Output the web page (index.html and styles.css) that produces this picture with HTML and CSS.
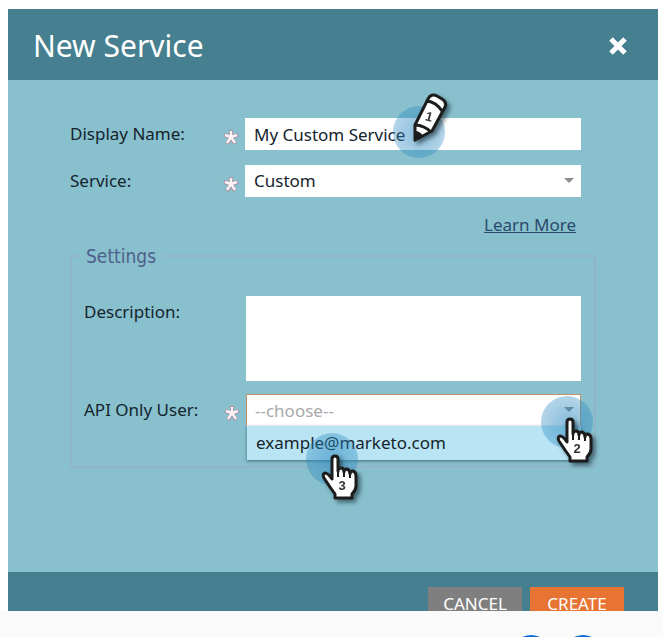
FILE: index.html
```html
<!DOCTYPE html>
<html lang="en">
<head>
  <meta charset="UTF-8">
  <meta name="viewport" content="width=device-width, initial-scale=1.0">
  <title>New Service</title>
  <link rel="stylesheet" href="styles.css">
</head>
<body>
  <main class="stage">
    <form class="dialog">
      <header class="dialog-header">
        <h1>New Service</h1>
        <button type="button" class="close-btn" aria-label="Close">
          <svg width="20" height="20" viewBox="0 0 20 20"><path d="M3 3L17 17M17 3L3 17" stroke="#fff" stroke-width="5"/></svg>
        </button>
      </header>

      <div class="dialog-body">
        <div class="row">
          <label for="display-name">Display Name:</label>
          <svg class="required" viewBox="0 0 16 16"><use href="#star"/></svg>
          <div class="field">
            <input type="text" id="display-name" value="My Custom Service">
            <div class="marker marker-one">
              <svg width="44" height="56" viewBox="8 2 44 56">
                <path d="M16 54V39L29 13Q32 7 38 10L43 13Q48 16 46 21L33 45Z" fill="#fff" stroke="#1c1c1c" stroke-width="3" stroke-linejoin="round"/>
                <path d="M28 15Q37 16 43 25M17 39Q26 40 32 46" fill="none" stroke="#1c1c1c" stroke-width="3"/>
                <path d="M16 54V46Q20 46 23 50Z" fill="#1c1c1c" stroke="#1c1c1c" stroke-width="2"/>
                <text x="30" y="35" text-anchor="middle" transform="rotate(15 30 31)">1</text>
              </svg>
            </div>
          </div>
        </div>

        <div class="row">
          <label for="service">Service:</label>
          <svg class="required" viewBox="0 0 16 16"><use href="#star"/></svg>
          <div class="field select-field">
            <select id="service"><option>Custom</option></select>
          </div>
        </div>

        <p class="learn-more"><a href="#">Learn More</a></p>

        <fieldset class="settings">
          <legend>Settings</legend>
          <div class="row row-top">
            <label for="description">Description:</label>
            <span></span>
            <div class="field"><textarea id="description"></textarea></div>
          </div>

          <div class="row">
            <label for="api-user">API Only User:</label>
            <svg class="required" viewBox="0 0 16 16"><use href="#star"/></svg>
            <div class="field select-field open">
              <select id="api-user"><option>--choose--</option></select>
              <ul class="menu">
                <li>example@marketo.com</li>
              </ul>
              <div class="marker marker-two">
                <svg width="42" height="52" viewBox="0 0 42 52">
                  <use href="#hand"/>
                  <text x="22" y="37" text-anchor="middle">2</text>
                </svg>
              </div>
              <div class="marker marker-three">
                <svg width="42" height="52" viewBox="0 0 42 52">
                  <use href="#hand"/>
                  <text x="22" y="37" text-anchor="middle">3</text>
                </svg>
              </div>
            </div>
          </div>
        </fieldset>
      </div>

      <footer class="dialog-footer">
        <button type="button" class="btn cancel-btn">CANCEL</button>
        <button type="submit" class="btn create-btn">CREATE</button>
      </footer>
    </form>
  </main>

  <div class="page-actions">
    <button type="button" class="round-btn" aria-label="Previous"></button>
    <button type="button" class="round-btn" aria-label="Next"></button>
  </div>

  <svg class="symbols" width="0" height="0">
    <symbol id="star" viewBox="0 0 16 16">
      <path d="M8 8V1M8 8L1 6M8 8L15 6M8 8L4 15M8 8L12 15" stroke="#b9778c" stroke-width="4" opacity="0.6"/>
      <path d="M8 8V2M8 8L2 6M8 8L14 6M8 8L4 14M8 8L12 14" stroke="#fff3f5" stroke-width="2.4"/>
    </symbol>
    <symbol id="hand" viewBox="0 0 42 52">
      <path d="M12 24V6Q12 3 15 3Q18 3 18 6V18Q18 15 21 15Q24 15 24 19Q24 16 27 16Q30 17 30 21Q30 18 33 18Q36 19 36 23V33Q36 37 32 41V45H15V41L10 34L4 25Q2 21 5 20Q8 20 12 26Z" fill="#fff" stroke="#1c1c1c" stroke-width="3" stroke-linejoin="round"/>
      <path d="M18 17V24M24 18V24M30 20V25" stroke="#1c1c1c" stroke-width="2"/>
    </symbol>
  </svg>
</body>
</html>
```
FILE: styles.css
```css
/* General Styles */
* {
  box-sizing: border-box;
}

body {
  margin: 0;
  font-family: 'Noto Sans', 'Open Sans', sans-serif;
  font-size: 17px;
  line-height: 24px;
  background-color: #fafafa;
  color: #14242c;
  height: 100vh;
  overflow: hidden;
}

input,
select,
textarea,
button {
  font: inherit;
  color: inherit;
  border: none;
  border-radius: 0;
  outline: none;
}

.stage {
  background-color: #fff;
  padding: 9px 5px 0 8px;
}

/* Dialog */
.dialog-header {
  display: flex;
  justify-content: space-between;
  align-items: center;
  padding: 17px 30px 14px 25px;
  background-color: #467f8f;
  color: #fff;
}

.dialog-header h1 {
  margin: 0;
  font-size: 30px;
  line-height: 40px;
  font-weight: 400;
}

.close-btn {
  display: flex;
  padding: 0;
  background: none;
  cursor: pointer;
}

.dialog-body {
  padding: 38px 62px 104px;
  background-color: #88c0ce;
}

.row {
  display: grid;
  grid-template-columns: 153px 22px 1fr;
  align-items: center;
  margin-bottom: 15px;
  padding-right: 15px;
}

.required {
  width: 16px;
  height: 16px;
  margin-top: 6px;
}

.field {
  position: relative;
}

.field input,
.field select,
.field textarea {
  display: block;
  width: 100%;
  height: 32px;
  padding: 0 9px;
  background-color: #fff;
}

.field select {
  appearance: none;
}

.field textarea {
  height: 85px;
  resize: none;
}

.select-field::after {
  content: '';
  position: absolute;
  top: 13px;
  right: 7px;
  border: 5px solid transparent;
  border-top-color: #8b8f8f;
  border-bottom: none;
}

.learn-more {
  margin: 16px 20px 0 0;
  text-align: right;
}

.learn-more a {
  color: #2b4a6b;
}

/* Settings */
.settings {
  margin: 7px 0 0;
  padding: 28px 13px 40px 12px;
  border: 2px solid #90b6cb;
}

.settings legend {
  margin-left: -4px;
  padding: 0 6px;
  font-family: 'DejaVu Sans Condensed', 'DejaVu Sans', sans-serif;
  font-size: 19px;
  color: #50608c;
}

.settings .row {
  grid-template-columns: 140px 22px 1fr;
  margin-bottom: 13px;
  padding-right: 0;
}

.settings .row:last-child {
  margin-bottom: 0;
}

.settings .row-top {
  align-items: start;
}

.row-top label {
  padding-top: 4px;
}

.open select {
  border: 1px solid #c09468;
  border-bottom: none;
  padding: 0 8px;
  color: #a9a9a9;
}

.menu {
  position: absolute;
  top: 32px;
  left: 1px;
  right: 0;
  margin: 0;
  padding: 0;
  list-style: none;
  box-shadow: 0 1px 3px rgba(30, 70, 85, 0.7);
}

.menu li {
  padding: 5px 9px;
  background-color: #b9e4f4;
}

/* Step markers */
.marker {
  position: absolute;
  width: 52px;
  height: 52px;
  border-radius: 50%;
  background: radial-gradient(rgba(40, 135, 190, 0.55), rgba(40, 135, 190, 0.35) 70%);
  pointer-events: none;
  z-index: 1;
}

.marker svg {
  position: absolute;
  top: 20px;
  left: 14px;
  filter: drop-shadow(3px 3px 2px rgba(20, 40, 50, 0.6));
}

.marker text {
  font-family: 'Liberation Sans', Arial, sans-serif;
  font-size: 13px;
  font-weight: 700;
  fill: #333;
}

.marker-one {
  top: -12px;
  left: 148px;
}

.marker-one svg {
  top: -18px;
}

.marker-two {
  top: 2px;
  right: -12px;
}

.marker-three {
  top: 39px;
  left: 60px;
}

/* Footer */
.dialog-footer {
  display: flex;
  justify-content: flex-end;
  gap: 8px;
  height: 39px;
  padding: 15px 34px 0;
  background-color: #467f8f;
  overflow: hidden;
}

.btn {
  min-width: 94px;
  height: 34px;
  padding: 0 12px;
  color: #fff;
  cursor: pointer;
}

.cancel-btn {
  background-color: #807f80;
}

.create-btn {
  background-color: #e77432;
}

.page-actions {
  display: flex;
  justify-content: flex-end;
  gap: 12px;
  padding: 24px 60px 0;
}

.round-btn {
  width: 40px;
  height: 40px;
  padding: 0;
  border-radius: 50%;
  background-color: #0b6cda;
}

.symbols {
  position: absolute;
}
```
